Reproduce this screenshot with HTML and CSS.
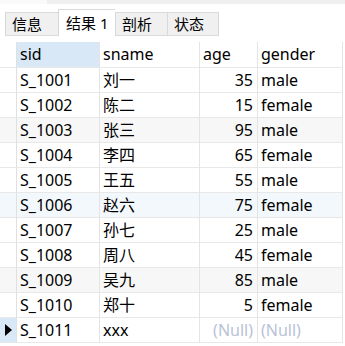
FILE: index.html
```html
<!DOCTYPE html>
<html lang="zh">
<head>
  <meta charset="UTF-8">
  <title>结果 1</title>
  <link rel="stylesheet" href="styles.css">
</head>
<body>

  <div class="topbar"><div class="topbar-left"></div></div>

  <div class="tabs">
    <div class="tab">信息</div>
    <div class="tab active">结果 1</div>
    <div class="tab">剖析</div>
    <div class="tab">状态</div>
  </div>

  <table class="grid">
    <thead>
      <tr>
        <th class="gutter"></th>
        <th class="col-sid selected">sid</th>
        <th class="col-sname">sname</th>
        <th class="col-age">age</th>
        <th class="col-gender">gender</th>
      </tr>
    </thead>
    <tbody>
      <tr><td class="gutter"></td><td>S_1001</td><td>刘一</td><td class="num">35</td><td>male</td></tr>
      <tr><td class="gutter"></td><td>S_1002</td><td>陈二</td><td class="num">15</td><td>female</td></tr>
      <tr class="alt"><td class="gutter"></td><td>S_1003</td><td>张三</td><td class="num">95</td><td>male</td></tr>
      <tr><td class="gutter"></td><td>S_1004</td><td>李四</td><td class="num">65</td><td>female</td></tr>
      <tr><td class="gutter"></td><td>S_1005</td><td>王五</td><td class="num">55</td><td>male</td></tr>
      <tr class="hover"><td class="gutter"></td><td>S_1006</td><td>赵六</td><td class="num">75</td><td>female</td></tr>
      <tr><td class="gutter"></td><td>S_1007</td><td>孙七</td><td class="num">25</td><td>male</td></tr>
      <tr><td class="gutter"></td><td>S_1008</td><td>周八</td><td class="num">45</td><td>female</td></tr>
      <tr class="alt"><td class="gutter"></td><td>S_1009</td><td>吴九</td><td class="num">85</td><td>male</td></tr>
      <tr><td class="gutter"></td><td>S_1010</td><td>郑十</td><td class="num">5</td><td>female</td></tr>
      <tr class="current"><td class="gutter"><span class="marker"></span></td><td>S_1011</td><td>xxx</td><td class="num null">(Null)</td><td class="null">(Null)</td></tr>
    </tbody>
  </table>

</body>
</html>
```

FILE: styles.css
```css
body {
  margin: 0;
  background: #fff;
  color: #000;
  font-family: "Noto Sans", "Noto Sans CJK SC", sans-serif;
}

.topbar {
  height: 4px;
  background: #f0f0f0;
}

.topbar-left {
  width: 47px;
  height: 4px;
  background: #fafafa;
}

/* TABS */
.tabs {
  display: flex;
  align-items: flex-end;
  padding-left: 5px;
  margin-top: 5px;
  height: 27px;
}

.tab {
  box-sizing: border-box;
  height: 24px;
  padding: 0 6px;
  background: #f0f0f0;
  border: 1px solid #d9d9d9;
  border-right: none;
  font-size: 15px;
  line-height: 22px;
}

.tab:first-child {
  width: 53px;
}

.tab:nth-child(3),
.tab:nth-child(4) {
  width: 52px;
}

.tab:last-child {
  border-right: 1px solid #d9d9d9;
}

.tab.active {
  width: 57px;
  height: 27px;
  background: #fff;
  border-bottom: none;
  line-height: 26px;
  padding-left: 7px;
}

/* GRID */
.grid {
  margin-top: 6px;
  border-collapse: separate;
  border-spacing: 0;
  table-layout: fixed;
  font-size: 16px;
}

.grid th,
.grid td {
  box-sizing: border-box;
  height: 25px;
  padding: 0 3px;
  border-right: 1px solid #e4e4e4;
  border-bottom: 1px solid #e8e8e8;
  text-align: left;
  font-weight: normal;
  white-space: nowrap;
  line-height: 23px;
}

.grid th {
  height: 26px;
}

.grid .gutter {
  width: 17px;
  padding: 0;
  border-right-color: #e0e0e0;
}

.col-sid { width: 83px; }
.col-sname { width: 100px; }
.col-age { width: 58px; }
.col-gender { width: 85px; }

.grid th.selected {
  background: #d9e8f7;
}

.grid td.num {
  text-align: right;
  padding-right: 4px;
}

.grid tr.alt td {
  background: #f7f7f7;
}

.grid tr.hover td {
  background: #f3f8fd;
}

.grid tr.current .gutter {
  background: #d9e8f7;
}

.grid .null {
  color: #b8c2d6;
}

.marker {
  display: block;
  width: 0;
  height: 0;
  margin-left: 5px;
  border-top: 6px solid transparent;
  border-bottom: 6px solid transparent;
  border-left: 7px solid #000;
}
```
